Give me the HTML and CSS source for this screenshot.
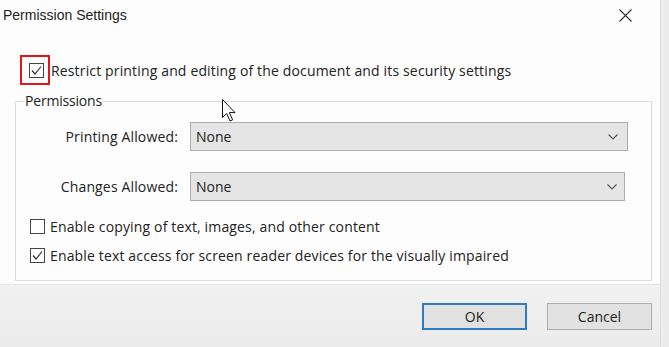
FILE: index.html
```html
<!DOCTYPE html>
<html lang="en">
<head>
    <meta charset="UTF-8">
    <title>Permission Settings</title>
    <link rel="stylesheet" href="styles.css">
</head>
<body>

    <div class="dialog">
        <div class="titlebar">
            <span class="title">Permission Settings</span>
            <svg class="close" width="13" height="13" viewBox="0 0 13 13">
                <path d="M0.5 0.5 L12.5 12.5 M12.5 0.5 L0.5 12.5" stroke="#333" stroke-width="1.1" fill="none"/>
            </svg>
        </div>

        <div class="restrict">
            <span class="highlight">
                <span class="checkbox checked">
                    <svg width="13" height="13" viewBox="0 0 13 13"><path d="M2 6.5 L5 10 L11 2.5" stroke="#333" stroke-width="1.2" fill="none"/></svg>
                </span>
            </span>
            <span class="text">Restrict printing and editing of the document and its security settings</span>
        </div>

        <fieldset class="group">
            <legend>Permissions</legend>

            <div class="field">
                <span class="label">Printing Allowed:</span>
                <div class="dropdown wide">
                    <span>None</span>
                    <svg width="10" height="6" viewBox="0 0 10 6"><path d="M0.5 0.5 L5 5 L9.5 0.5" stroke="#555" stroke-width="1.1" fill="none"/></svg>
                </div>
            </div>

            <div class="field second">
                <span class="label">Changes Allowed:</span>
                <div class="dropdown">
                    <span>None</span>
                    <svg width="10" height="6" viewBox="0 0 10 6"><path d="M0.5 0.5 L5 5 L9.5 0.5" stroke="#555" stroke-width="1.1" fill="none"/></svg>
                </div>
            </div>

            <div class="option first">
                <span class="checkbox"></span>
                <span class="text">Enable copying of text, images, and other content</span>
            </div>

            <div class="option">
                <span class="checkbox checked">
                    <svg width="13" height="13" viewBox="0 0 13 13"><path d="M2 6.5 L5 10 L11 2.5" stroke="#333" stroke-width="1.2" fill="none"/></svg>
                </span>
                <span class="text">Enable text access for screen reader devices for the visually impaired</span>
            </div>
        </fieldset>

        <div class="footer">
            <button class="btn default">OK</button>
            <button class="btn">Cancel</button>
        </div>

        <svg class="cursor" width="15" height="24" viewBox="0 0 15 24">
            <path d="M0.5 0.5 L0.5 18.5 L4.7 14.5 L8 22 L10.6 20.9 L7.4 13.6 L13 13.6 Z" fill="#fff" stroke="#111" stroke-width="1"/>
        </svg>
    </div>

</body>
</html>
```

FILE: styles.css
```css
* {
    margin: 0;
    padding: 0;
    box-sizing: border-box;
}

body {
    font-family: "Open Sans", "Liberation Sans", Arial, sans-serif;
    font-size: 14px;
    color: #222;
    background-color: #ececec;
    width: 669px;
    height: 347px;
    overflow: hidden;
}

.dialog {
    position: relative;
    width: 661px;
    height: 347px;
    background-color: #fdfdfd;
    border-right: 1px solid #dedede;
    display: flex;
    flex-direction: column;
}

.titlebar {
    height: 30px;
    display: flex;
    align-items: center;
    justify-content: space-between;
    padding: 0 28px 0 3px;
}

.title {
    font-family: "Liberation Sans", Arial, sans-serif;
    font-size: 14px;
    color: #222;
}

.text,
.label {
    letter-spacing: 0.15px;
}

.restrict {
    display: flex;
    align-items: center;
    margin-top: 25px;
    padding-left: 20px;
}

.highlight {
    width: 30px;
    height: 30px;
    border: 2px solid #e3151d;
    display: flex;
    align-items: center;
    padding-left: 7px;
    margin-right: 1px;
}

.checkbox {
    width: 15px;
    height: 15px;
    border: 1px solid #444;
    background-color: #fff;
    display: flex;
    align-items: center;
    justify-content: center;
    flex-shrink: 0;
}

.group {
    margin: 8px 8px 0 15px;
    border: 1px solid #dcdcdc;
    padding: 13px 14px 13px 14px;
    height: 188px;
}

.group legend {
    margin-left: -6px;
    padding: 0 1px;
    line-height: 16px;
    letter-spacing: -0.2px;
}

.field {
    display: flex;
    align-items: center;
    height: 29px;
}

.field.second {
    margin-top: 21px;
}

.label {
    width: 148px;
    text-align: right;
    margin-right: 12px;
}

.dropdown {
    width: 435px;
    height: 29px;
    background-color: #e5e5e5;
    border: 1px solid #adadad;
    display: flex;
    align-items: center;
    justify-content: space-between;
    padding: 0 7px 0 5px;
}

.dropdown.wide {
    width: 438px;
    padding-right: 9px;
}

.option {
    display: flex;
    align-items: center;
    height: 20px;
    margin-top: 9px;
}

.option.first {
    margin-top: 15px;
}

.option .text {
    margin-left: 5px;
}

.footer {
    flex: 1;
    margin-top: 3px;
    background: linear-gradient(#f1f1f1, #ebebeb);
    border-top: 1px solid #e4e4e4;
    display: flex;
    justify-content: flex-end;
    align-items: flex-start;
    padding: 18px 8px 0 0;
}

.btn {
    width: 105px;
    height: 27px;
    font-family: "Open Sans", "Liberation Sans", Arial, sans-serif;
    font-size: 14px;
    color: #222;
    background-color: #e1e1e1;
    border: 1px solid #adadad;
    margin-left: 20px;
}

.btn.default {
    border: 2px solid #2f7bc0;
}

.cursor {
    position: absolute;
    left: 222px;
    top: 99px;
}
```
